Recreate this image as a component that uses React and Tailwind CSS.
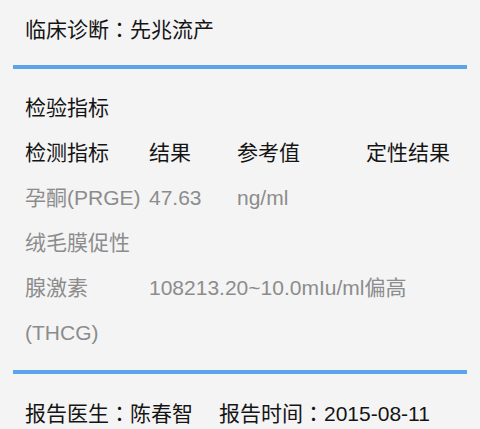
const rows = [
  { name: '孕酮(PRGE)', result: '47.63', ref: 'ng/ml', tag: '' },
  { name: '绒毛膜促性', result: '', ref: '', tag: '' },
  { name: '腺激素', result: '108213.20~10.0mIu/ml偏高', wide: true },
  { name: '(THCG)', result: '', ref: '', tag: '' },
];

// full-width colon, centred like the device font
const Colon = () => <span className="font-['Noto_Sans_CJK_TC',sans-serif]">：</span>;

export default function App() {
  return (
    <div className="min-h-screen w-[480px] h-[429px] overflow-hidden bg-[#f4f4f4] font-['Liberation_Sans','Noto_Sans_CJK_SC',sans-serif] text-[21px]">
      {/* 临床诊断 */}
      <div className="pt-[1px] pl-[25px] leading-[55px] text-[#141414]">
        临床诊断<Colon />先兆流产
      </div>
      <div className="mt-[8px] ml-[13px] w-[454px] h-[4px] bg-[#5ba3ec]" />

      {/* 检验指标 */}
      <div className="pt-[17px] pl-[25px] leading-[44px] text-[#141414]">检验指标</div>

      <div className="pl-[25px] grid grid-cols-[124px_88px_129px_1fr] leading-[45px]">
        <div className="text-[#141414]">检测指标</div>
        <div className="text-[#141414]">结果</div>
        <div className="text-[#141414]">参考值</div>
        <div className="text-[#141414]">定性结果</div>

        {rows.map((r, i) =>
          r.wide ? (
            <div key={i} className="contents text-[#8c8c8c]">
              <div>{r.name}</div>
              <div className="col-span-3 whitespace-nowrap">{r.result}</div>
            </div>
          ) : (
            <div key={i} className="contents text-[#8c8c8c]">
              <div className="whitespace-nowrap">{r.name}</div>
              <div>{r.result}</div>
              <div>{r.ref}</div>
              <div>{r.tag}</div>
            </div>
          )
        )}
      </div>

      <div className="mt-[15px] ml-[13px] w-[454px] h-[4px] bg-[#5ba3ec]" />

      {/* 报告信息 */}
      <div className="mt-[16px] pl-[25px] flex gap-[26px] leading-[45px] text-[#141414]">
        <span>报告医生<Colon />陈春智</span>
        <span>报告时间<Colon />2015-08-11</span>
      </div>
    </div>
  );
}
